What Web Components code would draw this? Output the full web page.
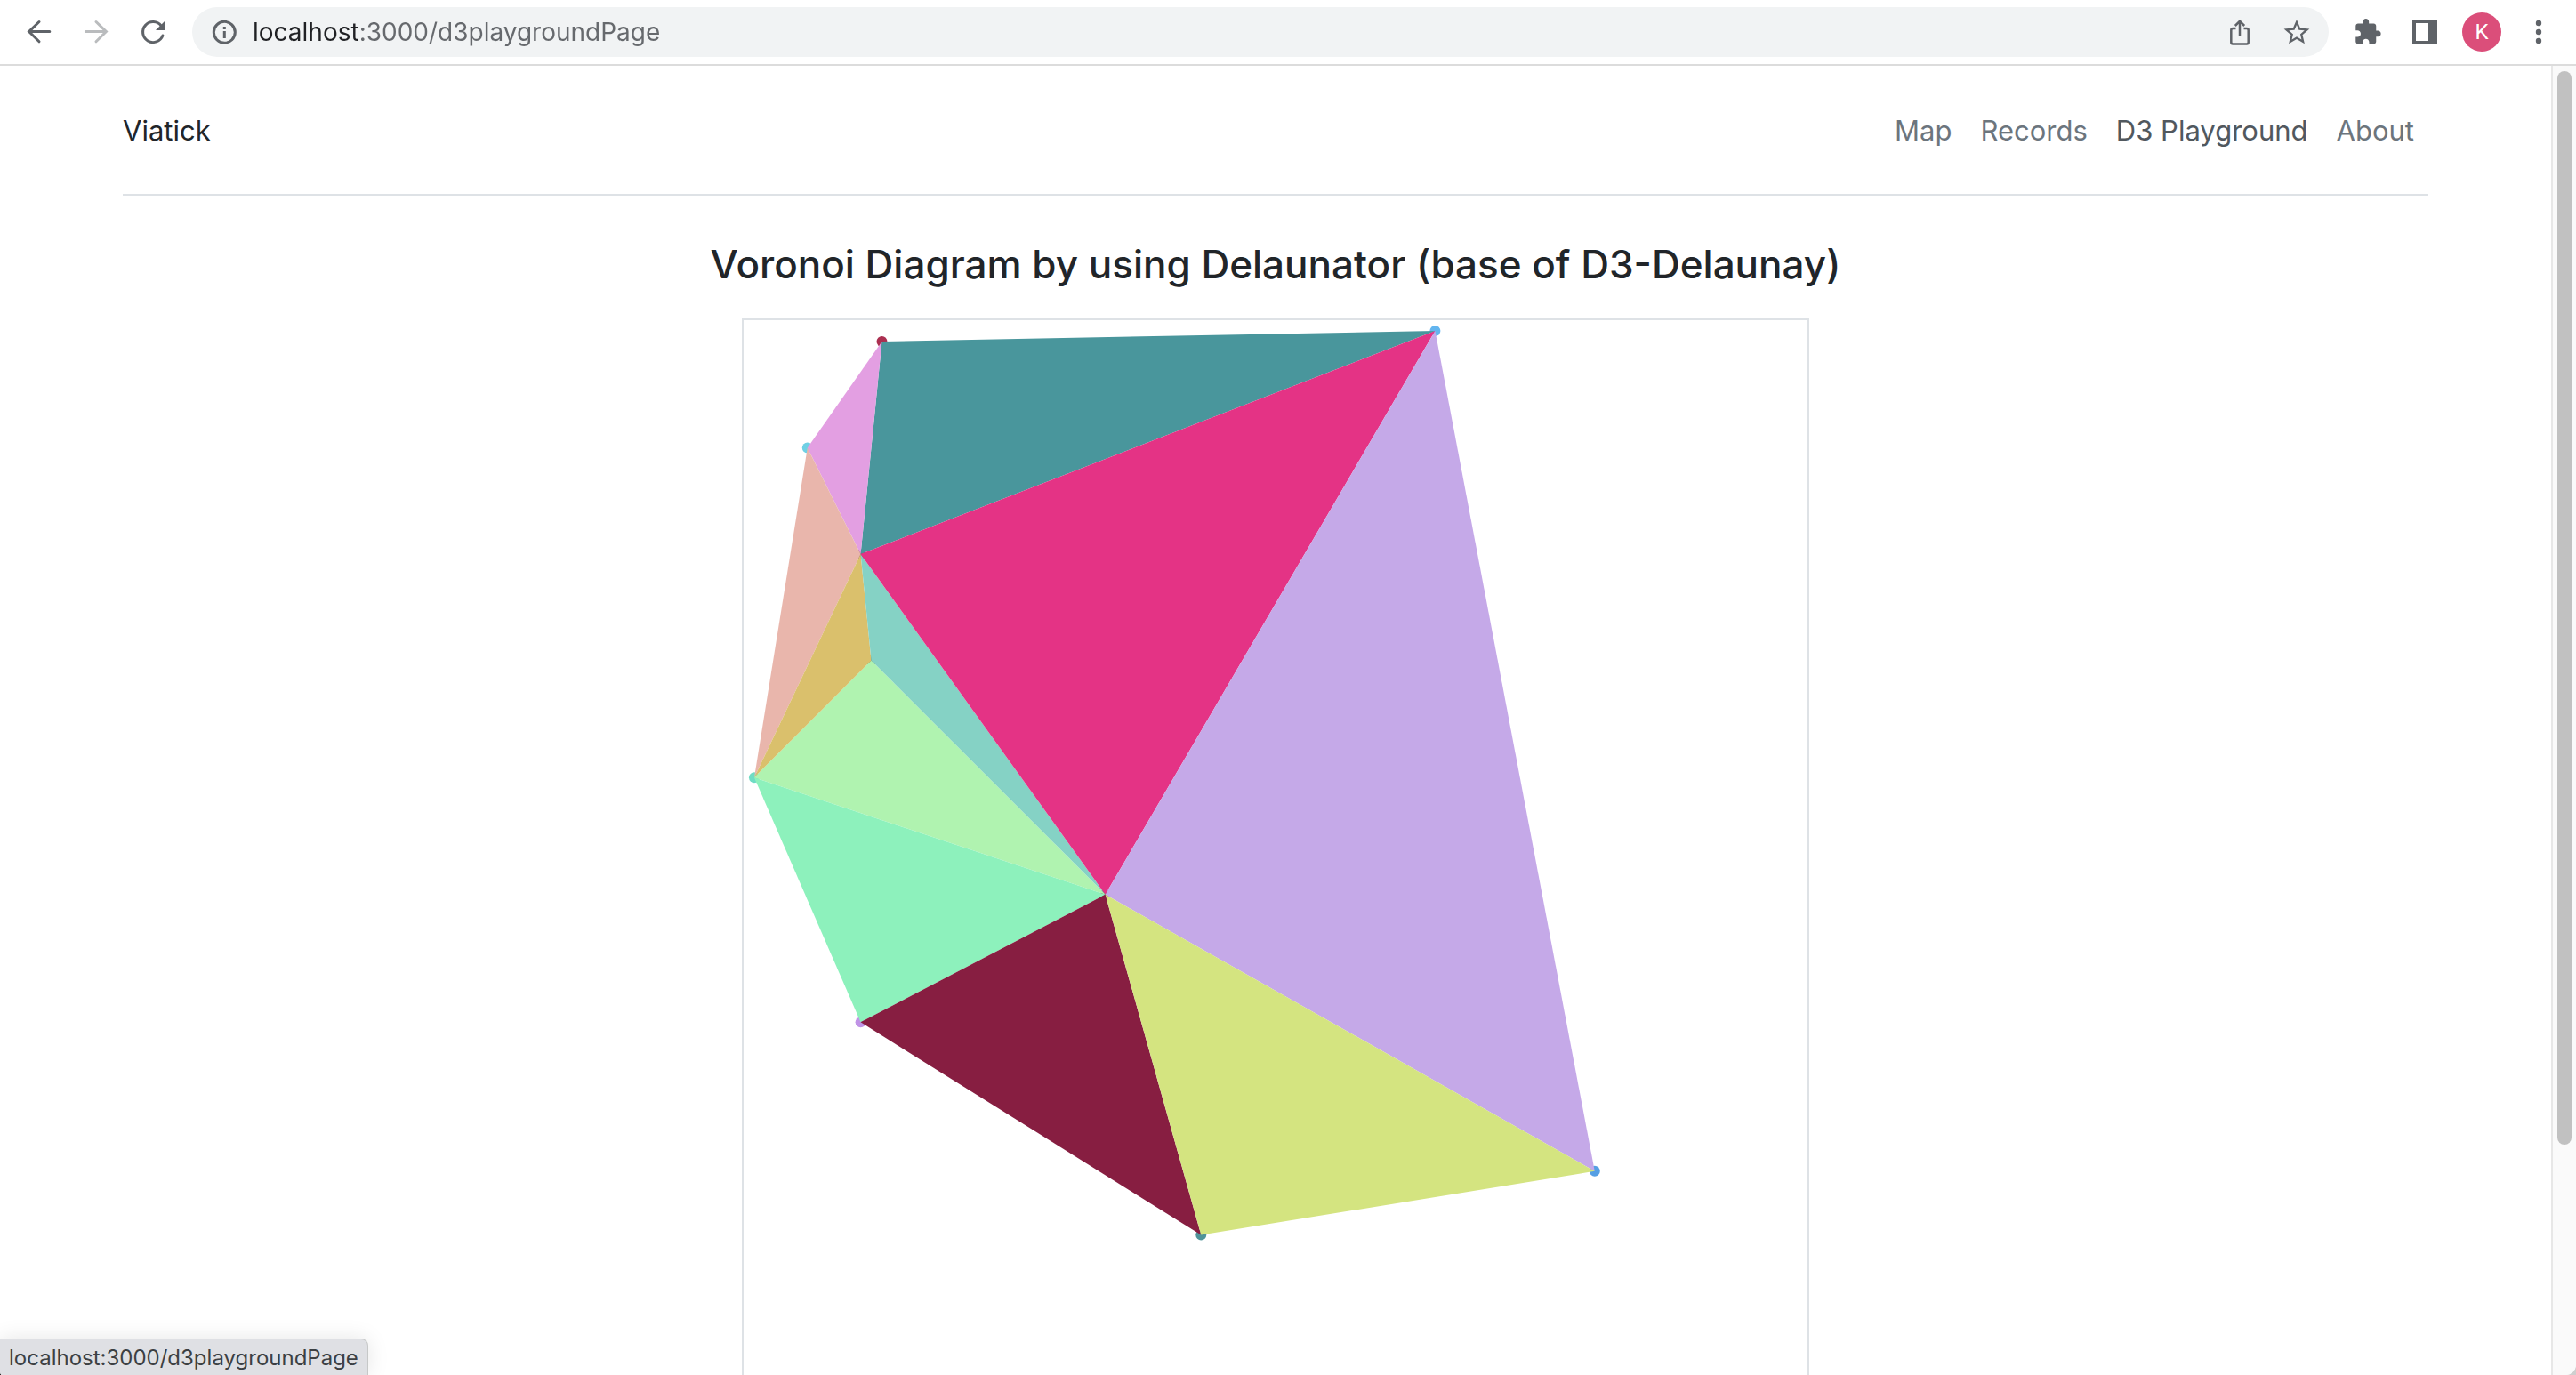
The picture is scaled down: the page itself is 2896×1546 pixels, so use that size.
<!DOCTYPE html>
<html lang="en">
<head>
<meta charset="utf-8">
<title>Viatick</title>
<style>
  html, body { margin: 0; height: 100%; }
  body { font-family: Inter, "Liberation Sans", sans-serif; color: #212529; background: linear-gradient(90deg, #111 50%, #cfcfcf 50%); overflow: hidden; }
</style>
</head>
<body>
<browser-window>
  <browser-toolbar slot="toolbar"></browser-toolbar>
  <site-header brand="Viatick">
    <nav-link href="#map">Map</nav-link>
    <nav-link href="#records">Records</nav-link>
    <nav-link href="#d3playgroundPage" active>D3 Playground</nav-link>
    <nav-link href="#about">About</nav-link>
  </site-header>
  <diagram-section>
    <span slot="title">Voronoi Diagram by using Delaunator (base of D3-Delaunay)</span>
    <delaunay-board></delaunay-board>
  </diagram-section>
  <scroll-track slot="scrollbar"></scroll-track>
  <status-bubble slot="status">localhost:3000/d3playgroundPage</status-bubble>
</browser-window>

<script>
const define = (name, html, setup) => customElements.define(name, class extends HTMLElement {
  constructor() {
    super();
    this.attachShadow({ mode: 'open' }).innerHTML = html;
  }
  connectedCallback() { if (setup) setup(this, this.shadowRoot); }
});

define('browser-window', `
<style>
  :host { display: flex; flex-direction: column; height: 100vh; background: #fff; position: relative; overflow: hidden; border-radius: 0 0 12px 2px / 0 0 12px 5px; }
  .view { flex: 1; min-height: 0; display: flex; }
  .page { flex: 1; min-width: 0; overflow: hidden; }
</style>
<slot name="toolbar"></slot>
<div class="view">
  <main class="page"><slot></slot></main>
  <slot name="scrollbar"></slot>
</div>
<slot name="status"></slot>`);

define('tool-button', `
<style>
  :host { display: block; flex: none; width: 64px; height: 56px; color: #5f6368; }
  :host([faded]) { color: #babcbe; }
  button { width: 100%; height: 100%; padding: 0; border: 0; background: none; color: inherit; font: inherit; display: flex; align-items: center; justify-content: center; }
</style>
<button type="button"><slot></slot></button>`, (el, root) => {
  root.querySelector('button').setAttribute('aria-label', el.getAttribute('label'));
});

define('browser-toolbar', `
<style>
  :host { display: flex; align-items: center; height: 72px; flex: none; padding: 0 10px 0 12px; border-bottom: 2px solid #dcdcdc; background: #fff; }
  svg { width: 32px; height: 32px; display: block; fill: none; stroke: currentColor; stroke-width: 3; overflow: visible; }
  .solid { fill: currentColor; stroke: none; }
  .omnibox { flex: 1; height: 56px; margin: 0 12px; padding: 0 4px; display: flex; align-items: center; border-radius: 28px; background: #f1f3f4; }
  input { flex: 1; min-width: 0; height: 48px; padding: 0; border: 0; outline: 0; font: 28px/48px Inter, "Liberation Sans", sans-serif; color: #5f6368;
    background: linear-gradient(90deg, #202124 121px, #66696d 121px); -webkit-background-clip: text; background-clip: text; -webkit-text-fill-color: transparent; }
  .avatar { width: 44px; height: 44px; border-radius: 50%; background: #db4e7a; color: #fff; font: 24px/44px Roboto, sans-serif; text-align: center; }
</style>
<tool-button label="Back"><svg viewBox="0 0 32 32" stroke-linecap="round"><path d="M16 4.5 4.6 15.6 16 26.8M5 15.6H27.8"/></svg></tool-button>
<tool-button label="Forward" faded><svg viewBox="0 0 32 32" stroke-linecap="round"><path d="M16 4.5 27.4 15.6 16 26.8M27 15.6H4.4"/></svg></tool-button>
<tool-button label="Reload"><svg viewBox="0 0 32 32"><path d="M25.3 9.2A11.5 11.5 0 1 0 26.9 20" stroke-linecap="round"/><path class="solid" d="M30 3V14H19Z"/></svg></tool-button>
<div class="omnibox">
  <tool-button label="Site information"><svg viewBox="0 0 32 32"><circle cx="16.3" cy="16.3" r="12"/><path d="M16.3 10V13M16.3 15V23"/></svg></tool-button>
  <input type="text" aria-label="Address" value="localhost:3000/d3playgroundPage" spellcheck="false">
  <tool-button label="Share"><svg viewBox="0 0 32 32" style="stroke-width:2.5"><path d="M11.5 12H8.2Q6.3 12 6.3 14V27.6Q6.3 29.6 8.2 29.6H23.8Q25.7 29.6 25.7 27.6V14Q25.7 12 23.8 12H20.5M16 20.5V4.5M10.8 9 16 3.8 21.2 9"/></svg></tool-button>
  <tool-button label="Bookmark"><svg viewBox="0 0 32 32"><path class="solid" transform="translate(-1.3 -.9) scale(1.44)" d="M22 9.24l-7.19-.62L12 2 9.19 8.63 2 9.24l5.46 4.73L5.82 21 12 17.27 18.18 21l-1.63-7.03L22 9.24zM12 15.4l-3.76 2.27 1-4.28-3.32-2.88 4.38-.38L12 6.1l1.71 4.04 4.38.38-3.32 2.88 1 4.28L12 15.4z"/></svg></tool-button>
</div>
<tool-button label="Extensions"><svg viewBox="0 0 32 32"><path class="solid" transform="translate(-.4 -.3) scale(1.35)" d="M20.5 11H19V7c0-1.1-.9-2-2-2h-4V3.5C13 2.12 11.88 1 10.5 1S8 2.12 8 3.5V5H4c-1.1 0-1.99.9-1.99 2v3.8H3.5c1.49 0 2.7 1.21 2.7 2.7s-1.21 2.7-2.7 2.7H2V20c0 1.1.9 2 2 2h3.8v-1.5c0-1.49 1.21-2.7 2.7-2.7 1.49 0 2.7 1.21 2.7 2.7V22H17c1.1 0 2-.9 2-2v-4h1.5c1.38 0 2.5-1.12 2.5-2.5S21.88 11 20.5 11z"/></svg></tool-button>
<tool-button label="Side panel"><svg viewBox="0 0 32 32"><path class="solid" fill-rule="evenodd" d="M2 2H30V30H2ZM6 6V26H20V6Z"/></svg></tool-button>
<tool-button label="Profile"><div class="avatar">K</div></tool-button>
<tool-button label="Menu"><svg viewBox="0 0 32 32"><g class="solid"><circle cx="16" cy="6" r="3.2"/><circle cx="16" cy="16" r="3.2"/><circle cx="16" cy="26" r="3.2"/></g></svg></tool-button>`);

define('site-header', `
<style>
  :host { display: block; padding: 0 24px; }
  header { display: flex; align-items: center; justify-content: space-between; box-sizing: border-box; max-width: 2592px; height: 146px; padding-top: 2px; margin: 0 auto; border-bottom: 2px solid #dee2e6; }
  .brand { color: #212529; text-decoration: none; font-size: 31px; line-height: 48px; }
  nav { display: flex; }
</style>
<header><a class="brand" href="#home"></a><nav aria-label="Main"><slot></slot></nav></header>`, (el, root) => {
  root.querySelector('.brand').textContent = el.getAttribute('brand');
});

define('nav-link', `
<style>
  :host { display: block; font-size: 31px; line-height: 48px; color: #6c757d; }
  :host([active]) { color: #51585e; }
  a { display: block; padding: 0 16px; color: inherit; text-decoration: none; }
</style>
<a><slot></slot></a>`, (el, root) => {
  const a = root.querySelector('a');
  a.href = el.getAttribute('href');
  if (el.hasAttribute('active')) a.setAttribute('aria-current', 'page');
});

define('diagram-section', `
<style>
  :host { display: flex; flex-direction: column; align-items: center; padding: 48px 24px; }
  h2 { margin: 0 0 32px; font-size: 44px; line-height: 58px; font-weight: 500; text-align: center; }
</style>
<h2><slot name="title"></slot></h2>
<slot></slot>`);

// Each vertex is a column and a row on a 100 x 100 grid, and the colour of its dot.
const points = {
  a: [13, 2, '#ab2f50'], b: [65, 1, '#62b5ef'], c: [6, 12, '#6fd0e4'],
  d: [11, 22, '#8a4f66'], e: [12, 32, '#5c7c5a'], f: [1, 43, '#6fdcc4'],
  g: [34, 54, '#7a4060'], h: [11, 66, '#c093e6'], i: [80, 80, '#559fe4'],
  j: [43, 86, '#4f9399']
};
const triangles = [
  ['adb', '#49969c'], ['acd', '#e39fe2'], ['cfd', '#e9b6ac'], ['dfe', '#dac06c'],
  ['deg', '#85d2c5'], ['dgb', '#e43385'], ['efg', '#b0f3b0'], ['fhg', '#8df1bc'],
  ['gib', '#c5a9e8'], ['hjg', '#871e41'], ['gji', '#d4e480']
];
const shapes =
  Object.values(points).map(([x, y, c]) => `<circle cx="${x}" cy="${y}" r=".5" fill="${c}"/>`).join('') +
  triangles.map(([v, c]) => `<polygon points="${[...v].map(k => points[k].slice(0, 2).join()).join(' ')}" fill="${c}"/>`).join('');

define('delaunay-board', `
<style>
  :host { display: block; box-sizing: border-box; width: 100%; max-width: 1200px; border: 2px solid #dee2e6; }
  svg { display: block; width: 100%; }
</style>
<svg viewBox="0 0 100 100" role="img" aria-label="Delaunay triangulation">${shapes}</svg>`);

define('scroll-track', `
<style>
  :host { display: block; flex: none; width: 26px; border-left: 2px solid #e7e7e7; background: #fafafa; }
  .thumb { width: 16px; height: 82%; margin: 6px auto; border-radius: 8px; background: #c1c1c1; }
</style>
<div class="thumb"></div>`);

define('status-bubble', `
<style>
  :host { position: absolute; left: 0; bottom: 0; padding: 2px 10px 0; font-size: 24px; line-height: 38px; color: #3c4043; background: #dfe0e4; border: solid #c6c8c8; border-width: 1px 1px 0 0; border-radius: 0 8px 0 0; box-shadow: 0 0 24px rgba(0, 0, 0, .1); }
</style>
<slot></slot>`);
</script>
</body>
</html>
